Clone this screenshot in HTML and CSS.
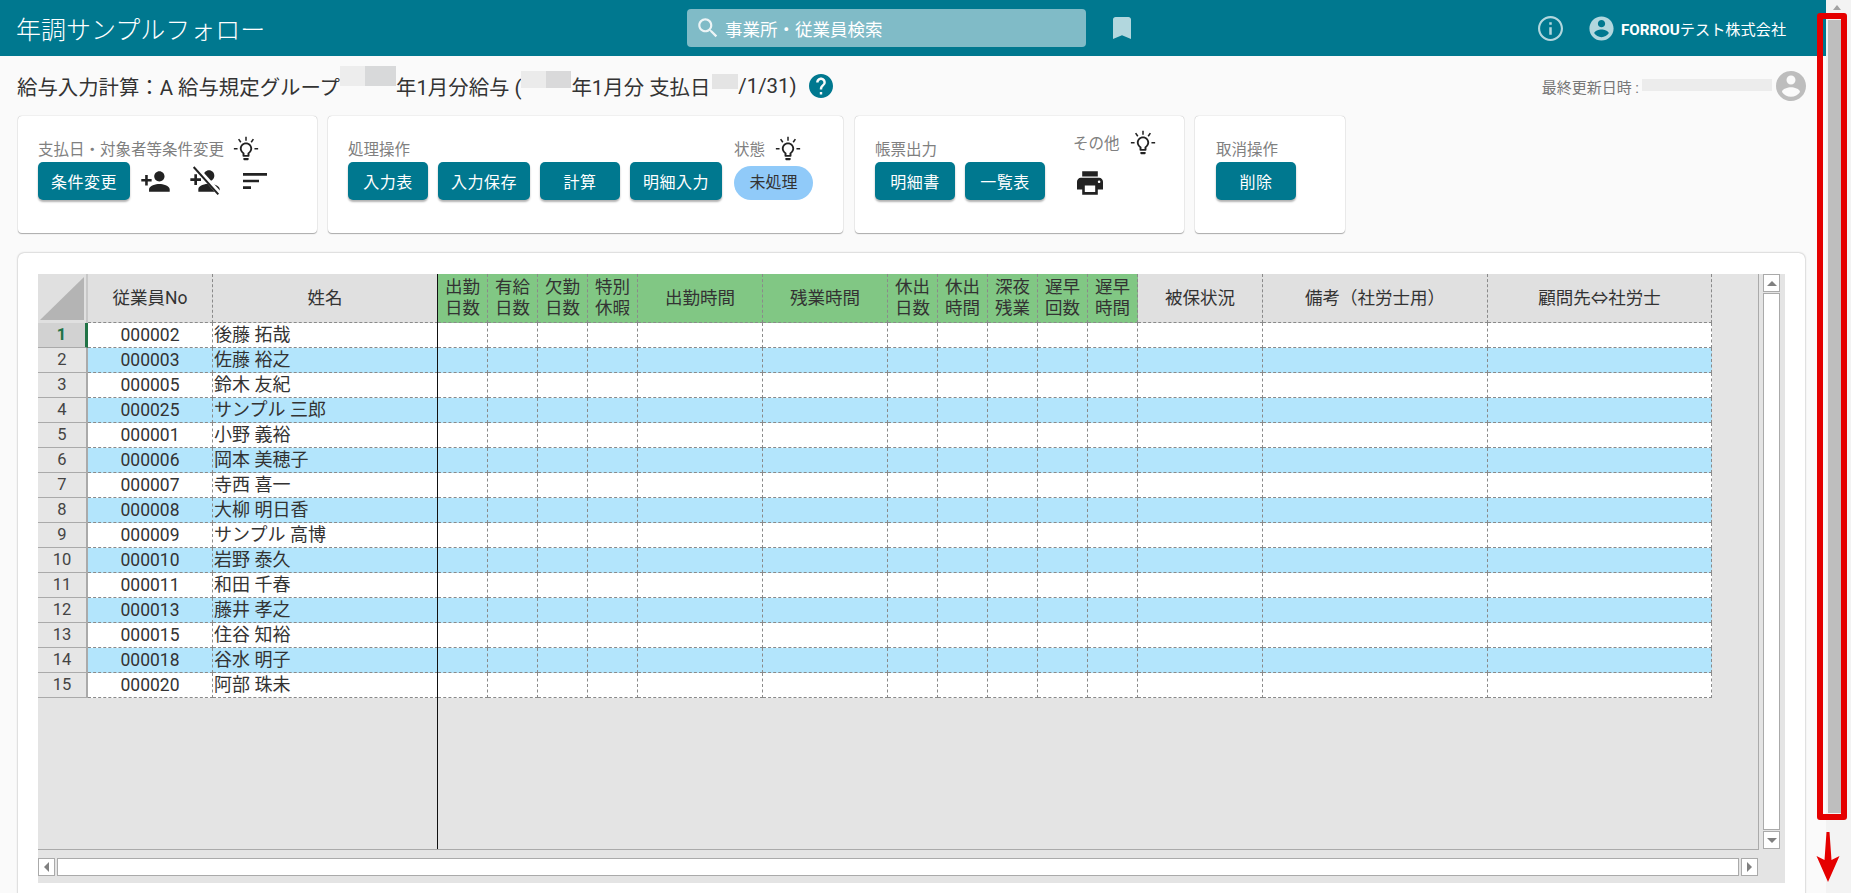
FILE: index.html
```html
<!DOCTYPE html>
<html lang="ja">
<head>
<meta charset="utf-8">
<title>年調サンプルフォロー</title>
<link rel="stylesheet" href="styles.css">
</head>
<body>
<svg class="defs" width="0" height="0" aria-hidden="true">
  <symbol id="i-bulb" viewBox="0 0 24 24">
    <path d="M9.600 21.600c0 .4.3.8.8.8h3.200c.5 0 .8-.4.8-.8v-1.200H9.600v1.200zM12 6c-3.100 0-5.700 2.500-5.700 5.600 0 1.900 1 3.600 2.500 4.600v2.200c0 .4.300.8.800.8h4.800c.500 0 .8-.4.8-.8v-2.200c1.500-1 2.500-2.700 2.500-4.600C17.700 8.500 15.100 6 12 6zm2.200 9-.8.600v1.900h-2.800v-1.900l-.8-.6c-1.100-.7-1.800-2-1.800-3.400 0-2.200 1.800-3.900 4-3.900s4 1.700 4 3.900c0 1.400-.7 2.700-1.800 3.400z"/>
    <path d="M11.300 .8h1.400v3.600h-1.400zM4.600 3.300l1.200-.8 2 2.900-1.200.8zM19.400 3.300l-1.200-.8-2 2.900 1.200.8zM.8 11h3.400v1.400H.8zM19.800 11h3.400v1.400h-3.400z"/>
  </symbol>
  <symbol id="i-account" viewBox="0 0 24 24">
    <path d="M12 2C6.480 2 2 6.480 2 12s4.480 10 10 10 10-4.480 10-10S17.520 2 12 2zm0 3c1.660 0 3 1.340 3 3s-1.340 3-3 3-3-1.340-3-3 1.340-3 3-3zm0 14.200c-2.500 0-4.710-1.280-6-3.220.03-1.990 4-3.080 6-3.080 1.990 0 5.970 1.090 6 3.080-1.290 1.940-3.500 3.220-6 3.220z"/>
  </symbol>
  <symbol id="i-person" viewBox="0 0 24 24">
    <path d="M15 12c2.210 0 4-1.790 4-4s-1.790-4-4-4-4 1.790-4 4 1.790 4 4 4zm-9-2V7H4v3H1v2h3v3h2v-3h3v-2H6zm9 4c-2.670 0-8 1.340-8 4v2h16v-2c0-2.660-5.330-4-8-4z"/>
  </symbol>
</svg>

<div class="page">
  <header class="appbar">
    <h1 class="app-title">年調サンプルフォロー</h1>
    <div class="search">
      <svg class="search-icon" viewBox="0 0 24 24"><path d="M15.500 14h-.79l-.28-.27C15.410 12.590 16 11.110 16 9.500 16 5.910 13.090 3 9.500 3S3 5.910 3 9.500 5.910 16 9.500 16c1.610 0 3.090-.59 4.230-1.570l.27.28v.79l5 4.990L20.490 19l-4.990-5zm-6 0C7.010 14 5 11.990 5 9.500S7.010 5 9.500 5 14 7.010 14 9.500 11.990 14 9.500 14z"/></svg>
      <span>事業所・従業員検索</span>
    </div>
    <svg class="bookmark" viewBox="5 3 14 18" preserveAspectRatio="none"><path d="M17 3H7c-1.100 0-1.990.9-1.990 2L5 21l7-3 7 3V5c0-1.100-.9-2-2-2z"/></svg>
    <svg class="info" viewBox="2 2 20 20"><path d="M11 7h2v2h-2zm0 4h2v6h-2zm1-9C6.480 2 2 6.480 2 12s4.480 10 10 10 10-4.480 10-10S17.520 2 12 2zm0 18.300c-4.580 0-8.300-3.720-8.300-8.300S7.420 3.700 12 3.700s8.300 3.720 8.300 8.300-3.720 8.300-8.300 8.300z"/></svg>
    <svg class="account"><use href="#i-account"/></svg>
    <div class="company"><b>FORROU</b>テスト株式会社</div>
  </header>

  <div class="titlebar">
    <span class="crumb">給与入力計算：A 給与規定グループ</span>
    <span class="mask mask-a"></span>
    <span class="crumb">年1月分給与 (</span>
    <span class="mask mask-b"></span>
    <span class="crumb">年1月分 支払日</span>
    <span class="mask mask-c"></span>
    <span class="crumb">/1/31)</span>
    <svg class="help" viewBox="2 2 20 20"><path d="M12 2C6.480 2 2 6.480 2 12s4.480 10 10 10 10-4.480 10-10S17.520 2 12 2zm1 17h-2v-2h2v2zm2.070-7.750l-.9.920C13.450 12.900 13 13.500 13 15h-2v-.5c0-1.100.45-2.100 1.170-2.830l1.240-1.260c.37-.36.59-.86.59-1.410 0-1.100-.9-2-2-2s-2 .9-2 2H8c0-2.210 1.790-4 4-4s4 1.790 4 4c0 .88-.36 1.680-.93 2.250z"/></svg>
    <div class="updated">
      <span>最終更新日時 :</span>
      <span class="mask mask-d"></span>
      <svg class="avatar"><use href="#i-account"/></svg>
    </div>
  </div>

  <section class="toolbar">
    <div class="card card-cond">
      <div class="group">
        <div class="label-row">
          <span class="label">支払日・対象者等条件変更</span>
          <svg class="bulb bulb-cond"><use href="#i-bulb"/></svg>
        </div>
        <div class="btn-row">
          <button class="btn btn-wide">条件変更</button>
          <svg class="tool tool-add" viewBox="0 0 24 24"><use href="#i-person" width="24" height="24"/></svg>
          <svg class="tool tool-del" viewBox="0 0 24 24"><use href="#i-person" width="24" height="24"/><path class="gap" d="M3.500 1.500 22 22"/><path class="slash" d="M3.500 1.500 22 22"/></svg>
          <svg class="tool tool-sort" viewBox="3 6 18 12"><path d="M3 18h6v-2H3v2zM3 6v2h18V6H3zm0 7h12v-2H3v2z"/></svg>
        </div>
      </div>
    </div>

    <div class="card card-process">
      <div class="group">
        <div class="label-row"><span class="label">処理操作</span></div>
        <div class="btn-row">
          <button class="btn">入力表</button>
          <button class="btn btn-wide">入力保存</button>
          <button class="btn">計算</button>
          <button class="btn btn-wide">明細入力</button>
        </div>
      </div>
      <div class="group group-status">
        <div class="label-row">
          <span class="label">状態</span>
          <svg class="bulb bulb-status"><use href="#i-bulb"/></svg>
        </div>
        <div class="status">未処理</div>
      </div>
    </div>

    <div class="card card-report">
      <div class="group">
        <div class="label-row"><span class="label">帳票出力</span></div>
        <div class="btn-row">
          <button class="btn">明細書</button>
          <button class="btn">一覧表</button>
        </div>
      </div>
      <div class="group group-other">
        <div class="label-row">
          <span class="label">その他</span>
          <svg class="bulb bulb-other"><use href="#i-bulb"/></svg>
        </div>
        <svg class="printer" viewBox="2 3 20 18"><path d="M19 8H5c-1.660 0-3 1.340-3 3v6h4v4h12v-4h4v-6c0-1.660-1.340-3-3-3zm-3 11H8v-5h8v5zm3-7c-.55 0-1-.45-1-1s.45-1 1-1 1 .45 1 1-.45 1-1 1zm-1-9H6v4h12V3z"/></svg>
      </div>
    </div>

    <div class="card card-cancel">
      <div class="group">
        <div class="label-row"><span class="label">取消操作</span></div>
        <div class="btn-row"><button class="btn">削除</button></div>
      </div>
    </div>
  </section>

  <main class="sheet-card">
    <div class="sheet">
      <div class="sheet-top">
        <div class="viewport">
          <div class="freeze"></div>
          <table class="grid">
            <colgroup>
              <col class="c-rh"><col class="c-m"><col class="c-name">
              <col class="c-s"><col class="c-s"><col class="c-s"><col class="c-s">
              <col class="c-m"><col class="c-m">
              <col class="c-s"><col class="c-s"><col class="c-s"><col class="c-s"><col class="c-s">
              <col class="c-m"><col class="c-l"><col class="c-last">
            </colgroup>
            <thead>
              <tr>
                <th class="corner"><div class="corner-tri"></div></th>
                <th>従業員No</th><th>姓名</th>
                <th class="g">出勤<br>日数</th><th class="g">有給<br>日数</th><th class="g">欠勤<br>日数</th><th class="g">特別<br>休暇</th>
                <th class="g">出勤時間</th><th class="g">残業時間</th>
                <th class="g">休出<br>日数</th><th class="g">休出<br>時間</th><th class="g">深夜<br>残業</th><th class="g">遅早<br>回数</th><th class="g">遅早<br>時間</th>
                <th>被保状況</th><th>備考（社労士用）</th><th>顧問先⇔社労士</th>
              </tr>
            </thead>
            <tbody>
              <tr><th class="rh rh-sel">1</th><td class="no">000002</td><td class="nm">後藤 拓哉</td><td></td><td></td><td></td><td></td><td></td><td></td><td></td><td></td><td></td><td></td><td></td><td></td><td></td><td></td></tr>
              <tr class="alt"><th class="rh">2</th><td class="no">000003</td><td class="nm">佐藤 裕之</td><td></td><td></td><td></td><td></td><td></td><td></td><td></td><td></td><td></td><td></td><td></td><td></td><td></td><td></td></tr>
              <tr><th class="rh">3</th><td class="no">000005</td><td class="nm">鈴木 友紀</td><td></td><td></td><td></td><td></td><td></td><td></td><td></td><td></td><td></td><td></td><td></td><td></td><td></td><td></td></tr>
              <tr class="alt"><th class="rh">4</th><td class="no">000025</td><td class="nm">サンプル 三郎</td><td></td><td></td><td></td><td></td><td></td><td></td><td></td><td></td><td></td><td></td><td></td><td></td><td></td><td></td></tr>
              <tr><th class="rh">5</th><td class="no">000001</td><td class="nm">小野 義裕</td><td></td><td></td><td></td><td></td><td></td><td></td><td></td><td></td><td></td><td></td><td></td><td></td><td></td><td></td></tr>
              <tr class="alt"><th class="rh">6</th><td class="no">000006</td><td class="nm">岡本 美穂子</td><td></td><td></td><td></td><td></td><td></td><td></td><td></td><td></td><td></td><td></td><td></td><td></td><td></td><td></td></tr>
              <tr><th class="rh">7</th><td class="no">000007</td><td class="nm">寺西 喜一</td><td></td><td></td><td></td><td></td><td></td><td></td><td></td><td></td><td></td><td></td><td></td><td></td><td></td><td></td></tr>
              <tr class="alt"><th class="rh">8</th><td class="no">000008</td><td class="nm">大柳 明日香</td><td></td><td></td><td></td><td></td><td></td><td></td><td></td><td></td><td></td><td></td><td></td><td></td><td></td><td></td></tr>
              <tr><th class="rh">9</th><td class="no">000009</td><td class="nm">サンプル 高博</td><td></td><td></td><td></td><td></td><td></td><td></td><td></td><td></td><td></td><td></td><td></td><td></td><td></td><td></td></tr>
              <tr class="alt"><th class="rh">10</th><td class="no">000010</td><td class="nm">岩野 泰久</td><td></td><td></td><td></td><td></td><td></td><td></td><td></td><td></td><td></td><td></td><td></td><td></td><td></td><td></td></tr>
              <tr><th class="rh">11</th><td class="no">000011</td><td class="nm">和田 千春</td><td></td><td></td><td></td><td></td><td></td><td></td><td></td><td></td><td></td><td></td><td></td><td></td><td></td><td></td></tr>
              <tr class="alt"><th class="rh">12</th><td class="no">000013</td><td class="nm">藤井 孝之</td><td></td><td></td><td></td><td></td><td></td><td></td><td></td><td></td><td></td><td></td><td></td><td></td><td></td><td></td></tr>
              <tr><th class="rh">13</th><td class="no">000015</td><td class="nm">住谷 知裕</td><td></td><td></td><td></td><td></td><td></td><td></td><td></td><td></td><td></td><td></td><td></td><td></td><td></td><td></td></tr>
              <tr class="alt"><th class="rh">14</th><td class="no">000018</td><td class="nm">谷水 明子</td><td></td><td></td><td></td><td></td><td></td><td></td><td></td><td></td><td></td><td></td><td></td><td></td><td></td><td></td></tr>
              <tr><th class="rh">15</th><td class="no">000020</td><td class="nm">阿部 珠未</td><td></td><td></td><td></td><td></td><td></td><td></td><td></td><td></td><td></td><td></td><td></td><td></td><td></td><td></td></tr>
            </tbody>
          </table>
        </div>
        <div class="vscroll">
          <div class="sb-btn"><i class="tri tri-up"></i></div>
          <div class="sb-track"></div>
          <div class="sb-btn"><i class="tri tri-down"></i></div>
        </div>
      </div>
      <div class="hscroll">
        <div class="sb-btn"><i class="tri tri-left"></i></div>
        <div class="sb-track"></div>
        <div class="sb-btn"><i class="tri tri-right"></i></div>
      </div>
    </div>
  </main>
</div>

<aside class="page-scroll">
  <i class="tri tri-page"></i>
  <div class="page-thumb"></div>
</aside>

<div class="callout-box"></div>
<svg class="callout-arrow" viewBox="0 0 24 50"><path d="M10.500 0H13.500L15.500 28 23.500 24 12 50 .5 24 8.500 28z"/></svg>
</body>
</html>
```

FILE: styles.css
```css
* { box-sizing: border-box; }

html, body { margin: 0; height: 100%; }

body {
  display: flex;
  width: 1851px;
  height: 893px;
  overflow: hidden;
  position: relative;
  background: #fafafa;
  color: #333;
  font-family: Roboto, "Noto Sans CJK JP", sans-serif;
}

.defs { position: absolute; }

.page { width: 1826px; flex: none; overflow: hidden; }

/* App bar */
.appbar {
  height: 56px;
  display: flex;
  align-items: center;
  padding-left: 16px;
  background: #00788f;
  color: #fff;
}
.app-title { margin: 0; width: 671px; font-size: 25px; font-weight: 300; white-space: nowrap; }
.search {
  width: 399px;
  height: 38px;
  display: flex;
  align-items: center;
  gap: 4px;
  padding-left: 8px;
  border-radius: 4px;
  background: #80bbc7;
  font-size: 17.500px;
  color: #fff;
}
.search-icon { width: 26px; height: 26px; fill: #fff; opacity: .85; }
.bookmark { width: 18px; height: 22px; margin-left: 27px; fill: #b2d7de; }
.info { width: 25px; height: 25px; margin-left: 407px; fill: #b2d7de; }
.account { width: 29px; height: 29px; margin-left: 24px; fill: #b2d7de; }
.company { margin-left: 5px; font-size: 15.200px; white-space: nowrap; }
.company b { font-weight: 700; }

/* Title row */
.titlebar {
  height: 60px;
  display: flex;
  align-items: center;
  padding: 0 17px 0 17px;
  white-space: nowrap;
}
.crumb { font-size: 20.400px; color: #333; }
.mask { flex: none; display: block; }
.mask-a { width: 56px; height: 20px; margin-bottom: 20px; background: linear-gradient(90deg, #ededed 45%, #d8d9da 45%); }
.mask-b { width: 50px; height: 17px; margin-bottom: 14px; background: linear-gradient(90deg, #ebebeb 50%, #d9d9da 50%); }
.mask-c { width: 26px; height: 15px; margin-bottom: 10px; margin-left: 2px; background: #e4e4e4; }
.help { width: 24px; height: 24px; margin-left: 12px; fill: #00788f; }
.updated { margin-left: auto; display: flex; align-items: center; font-size: 15px; color: #777; }
.mask-d { width: 130px; height: 12px; margin-bottom: 2px; margin-left: 3px; background: #ececec; }
.avatar { width: 36px; height: 36px; margin-left: 1px; fill: #bdbdbd; }

/* Action cards */
.toolbar { display: flex; gap: 11px; padding-left: 18px; }
.card {
  height: 117px;
  display: flex;
  padding: 23px 20px 0;
  background: #fff;
  border-radius: 4px;
  box-shadow: 0 1px 1px #aaa, 0 0 1px #999;
}
.card-cond { width: 299px; }
.card-process { width: 515px; margin-right: 1px; }
.card-report { width: 329px; }
.card-cancel { width: 150px; padding-left: 21px; }
.group { display: flex; flex-direction: column; }
.label-row { height: 23px; display: flex; align-items: center; }
.label { font-size: 15.500px; line-height: 23px; color: #808080; white-space: nowrap; }
.bulb { width: 26px; height: 26px; fill: #222; margin-top: -3px; }
.bulb-cond { margin-left: 9px; }
.bulb-status { margin-left: 10px; }
.bulb-other { margin-left: 10px; }
.btn-row { display: flex; align-items: center; gap: 10px; }

.btn {
  width: 80px;
  height: 38px;
  padding: 0;
  border: 0;
  border-radius: 5px;
  background: #00788f;
  color: #fff;
  font: 400 16px Roboto, "Noto Sans CJK JP", sans-serif;
  letter-spacing: .5px;
  box-shadow: 0 2px 2px rgba(0,0,0,.3);
}
.btn-wide { width: 92px; }

.tool { fill: #222; flex: none; }
.tool-add { width: 31px; height: 31px; }
.tool-del { width: 32px; height: 32px; margin-left: 8px; }
.tool-del .slash { stroke: #222; stroke-width: 1.500; fill: none; }
.tool-del .gap { stroke: #fff; stroke-width: 3.500; fill: none; transform: translate(.8px, -.6px); }
.tool-sort { width: 24px; height: 16px; margin-left: 12px; }

.group-status { margin-left: 12px; }
.status {
  width: 79px;
  height: 34px;
  margin-top: 4px;
  border-radius: 17px;
  background: #90caf9;
  color: #333;
  font-size: 16px;
  line-height: 34px;
  text-align: center;
}
.group-other { margin-left: 28px; margin-top: -6px; }
.printer { width: 26px; height: 24px; margin: 15px 0 0 4px; fill: #222; }

/* Spreadsheet */
.sheet-card {
  width: 1787px;
  height: 700px;
  margin: 20px 0 0 18px;
  padding: 21px 20px 0;
  background: #fff;
  border-radius: 6px;
  box-shadow: 0 0 2px #999;
}
.sheet { width: 1747px; height: 609px; background: #e4e4e4; }
.sheet-top { display: flex; height: 576px; }
.viewport {
  position: relative;
  width: 1721px;
  height: 576px;
  border-right: 1px solid #aaa;
  border-bottom: 1px solid #aaa;
  overflow: hidden;
}
.freeze { position: absolute; left: 399px; top: 0; bottom: 0; width: 1px; background: #111; }

.grid {
  table-layout: fixed;
  width: 1674px;
  border-collapse: separate;
  border-spacing: 0;
  font-size: 18px;
  color: #333;
}
.c-rh { width: 50px; }
.c-s { width: 50px; }
.c-m { width: 125px; }
.c-name { width: 225px; }
.c-l { width: 225px; }
.c-last { width: 224px; }

.grid thead th {
  height: 49px;
  padding: 0;
  font-weight: 400;
  font-size: 17.500px;
  line-height: 21px;
  background: #e0e0e0;
  border-right: 1px dashed #8a8a8a;
  border-bottom: 1px dashed #8a8a8a;
}
.grid thead th.g { background: #81c784; }
.grid thead th.corner { position: relative; background: #e0e0e0; border-bottom: 0; border-right: 2px solid #c8c8c8; }
.corner-tri {
  position: absolute;
  left: 2px;
  top: 3px;
  width: 44px;
  height: 43px;
  background: #b4b4b4;
  clip-path: polygon(100% 0, 100% 100%, 0 100%);
}
.grid tbody tr { height: 25px; background: #fff; }
.grid tbody tr.alt { background: #b3e5fc; }
.grid td {
  height: 25px;
  padding: 0;
  line-height: 24px;
  border-right: 1px dashed #8a8a8a;
  border-bottom: 1px dashed #8a8a8a;
  white-space: nowrap;
}
.grid .no { text-align: center; font-size: 17.500px; }
.grid .nm { padding-left: 1px; }
.grid .rh {
  height: 25px;
  padding: 0;
  font-weight: 400;
  font-size: 16.500px;
  line-height: 24px;
  background: #e6e6e6;
  color: #444;
  border-right: 2px solid #aaa;
  border-bottom: 1px solid #aaa;
}
.grid .rh-sel {
  background: #d2d2d2;
  color: #217346;
  font-weight: 700;
  border-right: 3px solid #217346;
}

/* Sheet scrollbars */
.vscroll {
  width: 26px;
  height: 575px;
  display: flex;
  flex-direction: column;
  gap: 1px;
  padding: 0 5px 0 4px;
}
.hscroll { display: flex; height: 25px; margin-top: 8px; gap: 2px; width: 1720px; }
.sb-btn {
  flex: none;
  width: 17px;
  height: 18px;
  display: flex;
  align-items: center;
  justify-content: center;
  background: #fff;
  border: 1px solid #aaa;
}
.sb-track { flex: 1; background: #fff; border: 1px solid #aaa; }
.hscroll .sb-btn, .hscroll .sb-track { height: 18px; }
.tri { display: block; width: 0; height: 0; border-style: solid; border-color: transparent; }
.tri-up { border-width: 0 5px 5px; border-bottom-color: #808080; }
.tri-down { border-width: 5px 5px 0; border-top-color: #808080; }
.tri-left { border-width: 5px 5px 5px 0; border-right-color: #808080; }
.tri-right { border-width: 5px 0 5px 5px; border-left-color: #808080; }

/* Browser scrollbar */
.page-scroll {
  flex: none;
  width: 25px;
  height: 893px;
  display: flex;
  flex-direction: column;
  padding: 5px 0 0 2px;
  background: #f3f3f3;
}
.tri-page { margin-left: 5px; border-width: 0 4.500px 5px; border-bottom-color: #a3a3a3; }
.page-thumb { width: 13px; height: 793px; margin-top: 10px; background: #bebebe; }

/* Red annotation */
.callout-box {
  position: absolute;
  left: 1817px;
  top: 13px;
  width: 30px;
  height: 807px;
  border: 6px solid #e50000;
  border-radius: 3px;
}
.callout-arrow { position: absolute; left: 1816px; top: 832px; width: 24px; height: 50px; fill: #e50000; }
```
